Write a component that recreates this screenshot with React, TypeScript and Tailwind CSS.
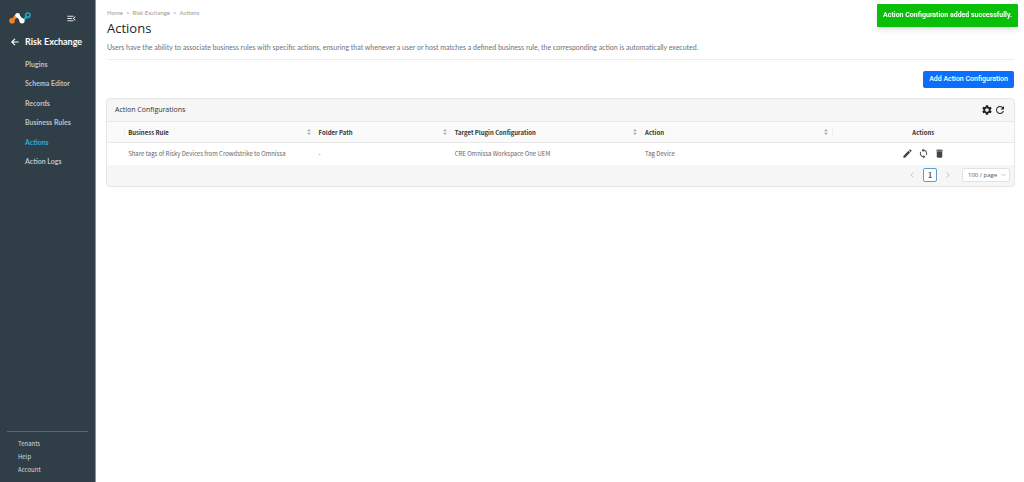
import React from 'react';
import { MdDelete, MdEdit, MdLoop, MdMenuOpen, MdRefresh, MdSettings } from 'react-icons/md';

interface ActionConfig {
  id: number;
  rule: string;
  folder: string;
  target: string;
  action: string;
}

const navItems = ['Plugins', 'Schema Editor', 'Records', 'Business Rules', 'Actions', 'Action Logs'];
const footerItems = ['Tenants', 'Help', 'Account'];
const columns = [
  { title: 'Business Rule', divider: false },
  { title: 'Folder Path', divider: false },
  { title: 'Target Plugin Configuration', divider: true },
  { title: 'Action', divider: true },
];

const rows: ActionConfig[] = [
  { id: 1, rule: 'Share tags of Risky Devices from Crowdstrike to Omnissa', folder: '-', target: 'CRE Omnissa Workspace One UEM', action: 'Tag Device' },
];

const Logo: React.FC = () => (
  <svg viewBox="0 0 22 12" className="w-[22px] h-3" fill="none" role="img" aria-label="Netskope">
    <path d="M3 8.8 7.6 3.4" stroke="#f58220" strokeWidth="2.6" />
    <circle cx="3" cy="8.8" r="2.8" fill="#f58220" />
    <circle cx="6" cy="5.2" r="1.6" fill="#f58220" />
    <path d="M8.6 3.4 13 8.6" stroke="#fff" strokeWidth="3.2" />
    <circle cx="8.6" cy="3.3" r="2.4" fill="#fff" />
    <path d="M13.6 8.8 17.6 4.8" stroke="#1ba5c8" strokeWidth="2.6" strokeLinecap="round" />
    <circle cx="13" cy="8.8" r="2.6" fill="#fff" />
    <circle cx="18.8" cy="3.2" r="2.2" stroke="#1ba5c8" strokeWidth="1.6" />
  </svg>
);

const Sorter: React.FC = () => (
  <svg viewBox="0 0 4 6" className="w-1 h-1.5 shrink-0" fill="#a6a6a6" aria-hidden="true">
    <path d="M2 0 3.9 2.3H.1zM2 6 .1 3.7h3.8z" />
  </svg>
);

const Sidebar: React.FC = () => (
  <aside className="w-24 shrink-0 min-h-screen flex flex-col bg-[#303e47] border-r border-[#87929a] text-[#bcc3c8]">
    <div className="h-9 pl-[9px] pr-[18px] flex items-center justify-between">
      <Logo />
      <button aria-label="Collapse menu" className="text-[#dfe3e5]"><MdMenuOpen className="w-[11px] h-[11px]" /></button>
    </div>
    <a href="#" className="h-3 pl-[11px] flex items-center gap-[6px] font-['Lato',sans-serif] text-[9px] leading-3 font-bold text-white whitespace-nowrap">
      <svg viewBox="0 0 8 8" className="w-2 h-2 shrink-0" fill="none" stroke="currentColor" strokeWidth="1.2" aria-hidden="true"><path d="M7.6 4H1M4 .8.8 4 4 7.2" /></svg>
      Risk Exchange
    </a>
    <nav className="mt-[6px] pl-[25px] h-[117px] flex flex-col font-['Lato',sans-serif] text-[7px] font-bold">
      {navItems.map((item) => (
        <a key={item} href="#" className={item === 'Actions' ? 'flex-1 flex items-center text-[#2bb0d3]' : 'flex-1 flex items-center'}>{item}</a>
      ))}
    </nav>
    <div className="mt-auto mx-[7px] pt-[5px] pb-[6px] pl-[11px] border-t border-[#5b6870] flex flex-col text-[6px] leading-[13px] text-[#d5d9dc]">
      {footerItems.map((item) => <a key={item} href="#">{item}</a>)}
    </div>
  </aside>
);

const ConfigTable: React.FC = () => (
  <section className="mt-[10px] -mx-px rounded-sm border border-[#e6e6e6] bg-[#f6f6f6] overflow-hidden">
    <div className="h-[22px] pl-2 pr-2 flex items-center justify-between">
      <h2 className="font-['Open_Sans',sans-serif] text-[7px] font-medium text-[#333]">Action Configurations</h2>
      <div className="flex gap-px text-[#222]">
        <button aria-label="Table settings"><MdSettings className="w-3 h-3" /></button>
        <button aria-label="Refresh"><MdRefresh className="w-3 h-3" /></button>
      </div>
    </div>
    <table className="w-full table-fixed border-collapse text-[6px] text-left text-[#666]">
      <colgroup>
        <col className="w-[2%]" />
        <col className="w-[21%]" />
        <col className="w-[15%]" />
        <col className="w-[21%]" />
        <col className="w-[21%]" />
        <col className="w-[20%]" />
      </colgroup>
      <thead>
        <tr className="h-[21px] bg-[#fafafa] border-y border-[#e8e8e8] text-[#333]">
          <td><div className="ml-auto w-px h-[10px] bg-[#f0f0f0]" /></td>
          {columns.map((col) => (
            <th key={col.title} scope="col" className="pl-[3px] font-bold">
              <div className="flex items-center gap-1">
                <span className="flex-1">{col.title}</span>
                <Sorter />
                <span className={col.divider ? 'w-px h-[10px] bg-[#f0f0f0]' : 'w-px h-[10px]'} />
              </div>
            </th>
          ))}
          <th scope="col" className="font-bold text-center">Actions</th>
        </tr>
      </thead>
      <tbody>
        {rows.map((row) => (
          <tr key={row.id} className="h-[22px] bg-white">
            <td />
            <td className="pl-[3px] whitespace-nowrap">{row.rule}</td>
            <td className="pl-[3px]">{row.folder}</td>
            <td className="pl-[3px] whitespace-nowrap">{row.target}</td>
            <td className="pl-[3px]">{row.action}</td>
            <td>
              <div className="flex justify-center gap-[5px] text-[#444]">
                <button aria-label="Edit"><MdEdit className="w-[11px] h-[11px]" /></button>
                <button aria-label="Sync"><MdLoop className="w-[11px] h-[11px]" /></button>
                <button aria-label="Delete"><MdDelete className="w-[11px] h-[11px]" /></button>
              </div>
            </td>
          </tr>
        ))}
      </tbody>
    </table>
    <div className="h-[21px] pr-1 flex items-center justify-end text-[6px] text-[#555]">
      <button aria-label="Previous page" className="w-[14px] flex justify-center">
        <svg viewBox="0 0 4 6" className="w-1 h-1.5" fill="none" stroke="#bbb" strokeWidth="0.8"><path d="M3.5.5.8 3l2.7 2.5" /></svg>
      </button>
      <button aria-current="page" className="mx-1 w-[14px] h-[14px] rounded-[2px] border border-[#5b9fc4] bg-white text-[7px] font-bold leading-3 text-[#6b4a36]">1</button>
      <button aria-label="Next page" className="w-[14px] flex justify-center">
        <svg viewBox="0 0 4 6" className="w-1 h-1.5" fill="none" stroke="#bbb" strokeWidth="0.8"><path d="M.5.5 3.2 3 .5 5.5" /></svg>
      </button>
      <div className="relative ml-[7px] flex">
        <select aria-label="Page size" className="w-12 h-[14px] pl-[5px] appearance-none rounded-[2px] border border-[#e2e2e2] bg-white font-['Open_Sans',sans-serif] text-[6px] leading-3">
          <option>100 / page</option>
        </select>
        <svg viewBox="0 0 6 4" className="absolute right-1 top-[5px] w-[5px] h-1 pointer-events-none" fill="none" stroke="#bbb" strokeWidth="0.8"><path d="M.5.5 3 3.2 5.5.5" /></svg>
      </div>
    </div>
  </section>
);

const App: React.FC = () => (
  <div className="min-h-screen flex bg-white font-['Noto_Sans_CJK_SC',sans-serif]">
    <Sidebar />
    <main className="flex-1 min-w-0 pl-[11px] pr-[10px] pt-2">
      <nav aria-label="Breadcrumb" className="flex gap-[3px] font-['Lato',sans-serif] text-[6px] leading-[10px] text-[#999]">
        <a href="#">Home</a>
        <span>&gt;</span>
        <a href="#">Risk Exchange</a>
        <span>&gt;</span>
        <span>Actions</span>
      </nav>
      <h1 className="font-['Open_Sans',sans-serif] text-[13px] leading-5 text-[#262626]">Actions</h1>
      <p className="mt-1 pb-[7px] font-['Lato',sans-serif] text-[7px] leading-[10px] text-[#6b7278] border-b border-[#ededed]">
        Users have the ability to associate business rules with specific actions, ensuring that whenever a user or host matches a defined business rule, the corresponding action is automatically executed.
      </p>
      <div className="mt-[11px] flex justify-end">
        <button className="h-[17px] px-[6px] rounded-[2px] bg-[#0d6efd] font-['Roboto',sans-serif] text-[7px] font-medium text-white">Add Action Configuration</button>
      </div>
      <ConfigTable />
    </main>
    <div role="status" className="fixed top-1 right-[6px] h-[23px] px-[6px] flex items-center rounded-[1px] bg-[#0abf0a] shadow-md font-['Roboto',sans-serif] text-[7px] font-bold text-white">
      Action Configuration added successfully.
    </div>
  </div>
);

export default App;
